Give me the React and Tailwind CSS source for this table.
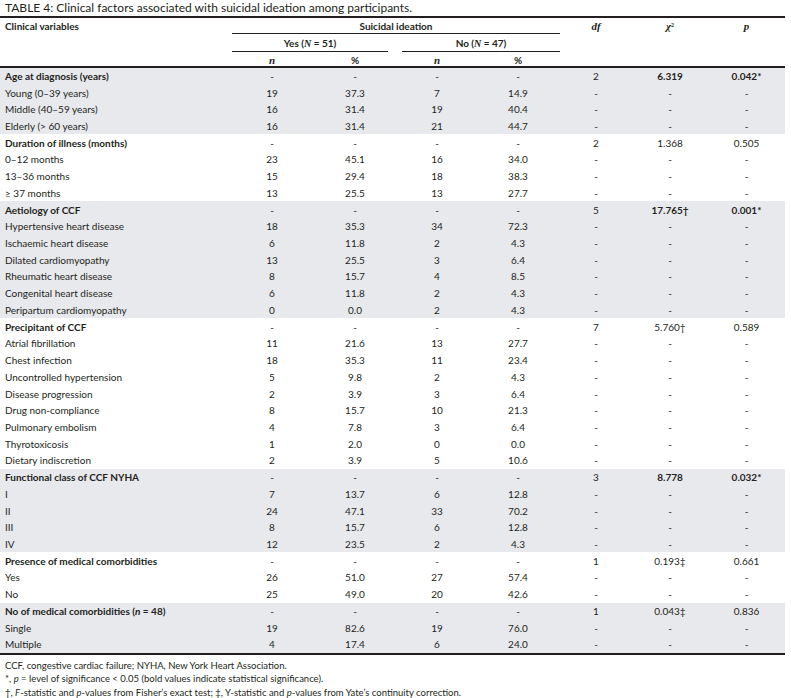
const cols = "grid grid-cols-[232px_80px_86px_78px_84px_72px_76px_77px]";

const groups = [
  {
    shaded: true,
    head: ["Age at diagnosis (years)", "2", "6.319", "0.042*"],
    bold: true,
    rows: [
      ["Young (0–39 years)", "19", "37.3", "7", "14.9"],
      ["Middle (40–59 years)", "16", "31.4", "19", "40.4"],
      ["Elderly (> 60 years)", "16", "31.4", "21", "44.7"],
    ],
  },
  {
    shaded: false,
    head: ["Duration of illness (months)", "2", "1.368", "0.505"],
    rows: [
      ["0–12 months", "23", "45.1", "16", "34.0"],
      ["13–36 months", "15", "29.4", "18", "38.3"],
      ["≥ 37 months", "13", "25.5", "13", "27.7"],
    ],
  },
  {
    shaded: true,
    head: ["Aetiology of CCF", "5", "17.765†", "0.001*"],
    bold: true,
    rows: [
      ["Hypertensive heart disease", "18", "35.3", "34", "72.3"],
      ["Ischaemic heart disease", "6", "11.8", "2", "4.3"],
      ["Dilated cardiomyopathy", "13", "25.5", "3", "6.4"],
      ["Rheumatic heart disease", "8", "15.7", "4", "8.5"],
      ["Congenital heart disease", "6", "11.8", "2", "4.3"],
      ["Peripartum cardiomyopathy", "0", "0.0", "2", "4.3"],
    ],
  },
  {
    shaded: false,
    head: ["Precipitant of CCF", "7", "5.760†", "0.589"],
    rows: [
      ["Atrial fibrillation", "11", "21.6", "13", "27.7"],
      ["Chest infection", "18", "35.3", "11", "23.4"],
      ["Uncontrolled hypertension", "5", "9.8", "2", "4.3"],
      ["Disease progression", "2", "3.9", "3", "6.4"],
      ["Drug non-compliance", "8", "15.7", "10", "21.3"],
      ["Pulmonary embolism", "4", "7.8", "3", "6.4"],
      ["Thyrotoxicosis", "1", "2.0", "0", "0.0"],
      ["Dietary indiscretion", "2", "3.9", "5", "10.6"],
    ],
  },
  {
    shaded: true,
    head: ["Functional class of CCF NYHA", "3", "8.778", "0.032*"],
    bold: true,
    rows: [
      ["I", "7", "13.7", "6", "12.8"],
      ["II", "24", "47.1", "33", "70.2"],
      ["III", "8", "15.7", "6", "12.8"],
      ["IV", "12", "23.5", "2", "4.3"],
    ],
  },
  {
    shaded: false,
    head: ["Presence of medical comorbidities", "1", "0.193‡", "0.661"],
    rows: [
      ["Yes", "26", "51.0", "27", "57.4"],
      ["No", "25", "49.0", "20", "42.6"],
    ],
  },
  {
    shaded: true,
    head: [
      <>
        No of medical comorbidities (<i>n</i> = 48)
      </>,
      "1",
      "0.043‡",
      "0.836",
    ],
    rows: [
      ["Single", "19", "82.6", "19", "76.0"],
      ["Multiple", "4", "17.4", "6", "24.0"],
    ],
  },
];

function Row({ cells }) {
  return (
    <div className={`${cols} h-[16.72px] items-center`}>
      <div className="pl-[5px]">{cells[0]}</div>
      {cells.slice(1).map((c, i) => (
        <div key={i} className="text-center">
          {c}
        </div>
      ))}
    </div>
  );
}

function Group({ g }) {
  const [label, df, chi, p] = g.head;
  return (
    <div className={g.shaded ? "bg-[#e8e9ed]" : ""}>
      <div className={`${cols} h-[16.72px] items-center`}>
        <div className="pl-[5px] font-bold">{label}</div>
        <div className="text-center">-</div>
        <div className="text-center">-</div>
        <div className="text-center">-</div>
        <div className="text-center">-</div>
        <div className="text-center">{df}</div>
        <div className={`text-center ${g.bold ? "font-bold" : ""}`}>{chi}</div>
        <div className={`text-center ${g.bold ? "font-bold" : ""}`}>{p}</div>
      </div>
      {g.rows.map((r, i) => (
        <Row key={i} cells={[...r, "-", "-", "-"]} />
      ))}
    </div>
  );
}

export default function App() {
  return (
    <div className="w-[791px] h-[698px] bg-white text-[#231f20] font-['Lato',sans-serif] text-[10px] leading-none overflow-hidden">
      <div className="w-[785px]">
        <div className="h-[15.5px] pl-[5px] pt-[2px] text-[12px]">
          TABLE 4: Clinical factors associated with suicidal ideation among participants.
        </div>
        <div className="h-[2px] bg-[#231f20]" />

        {/* header */}
        <div className={`${cols} font-bold`}>
          <div className="pl-[5px] pt-[3px] row-span-3">Clinical variables</div>
          <div className="col-span-4 h-[16px] pt-[3px] text-center border-b border-[#231f20]">
            Suicidal ideation
          </div>
          <div className="row-span-3 pt-[3px] text-center italic font-['Liberation_Serif',serif] text-[11px]">df</div>
          <div className="row-span-3 pt-[3px] text-center italic font-['Liberation_Serif',serif] text-[11px]">
            χ<sup className="text-[6px] not-italic">2</sup>
          </div>
          <div className="row-span-3 pt-[3px] text-center italic font-['Liberation_Serif',serif] text-[11px]">p</div>

          <div className="col-span-2 mr-[10px] h-[18px] pt-[4px] text-center border-b border-[#231f20]">
            Yes (<i className="font-['Liberation_Serif',serif]">N</i> = 51)
          </div>
          <div className="col-span-2 ml-[4px] h-[18px] pt-[4px] text-center border-b border-[#231f20]">
            No (<i className="font-['Liberation_Serif',serif]">N</i> = 47)
          </div>

          <div className="h-[14px] pt-[3px] text-center italic font-['Liberation_Serif',serif] text-[11px]">n</div>
          <div className="h-[14px] pt-[3px] text-center">%</div>
          <div className="h-[14px] pt-[3px] text-center italic font-['Liberation_Serif',serif] text-[11px]">n</div>
          <div className="h-[14px] pt-[3px] text-center">%</div>
        </div>
        <div className="h-[2px] bg-[#231f20]" />

        {groups.map((g, i) => (
          <Group key={i} g={g} />
        ))}
        <div className="h-[2px] bg-[#231f20]" />
      </div>

      <div className="pl-[5px] pt-[4px] text-[9.5px] leading-[13.5px]">
        <p>CCF, congestive cardiac failure; NYHA, New York Heart Association.</p>
        <p>
          *, <i>p</i> = level of significance &lt; 0.05 (bold values indicate statistical significance).
        </p>
        <p>
          †, <i>F</i>-statistic and <i>p</i>-values from Fisher’s exact test; ‡, Y-statistic and <i>p</i>-values from
          Yate’s continuity correction.
        </p>
      </div>
    </div>
  );
}
